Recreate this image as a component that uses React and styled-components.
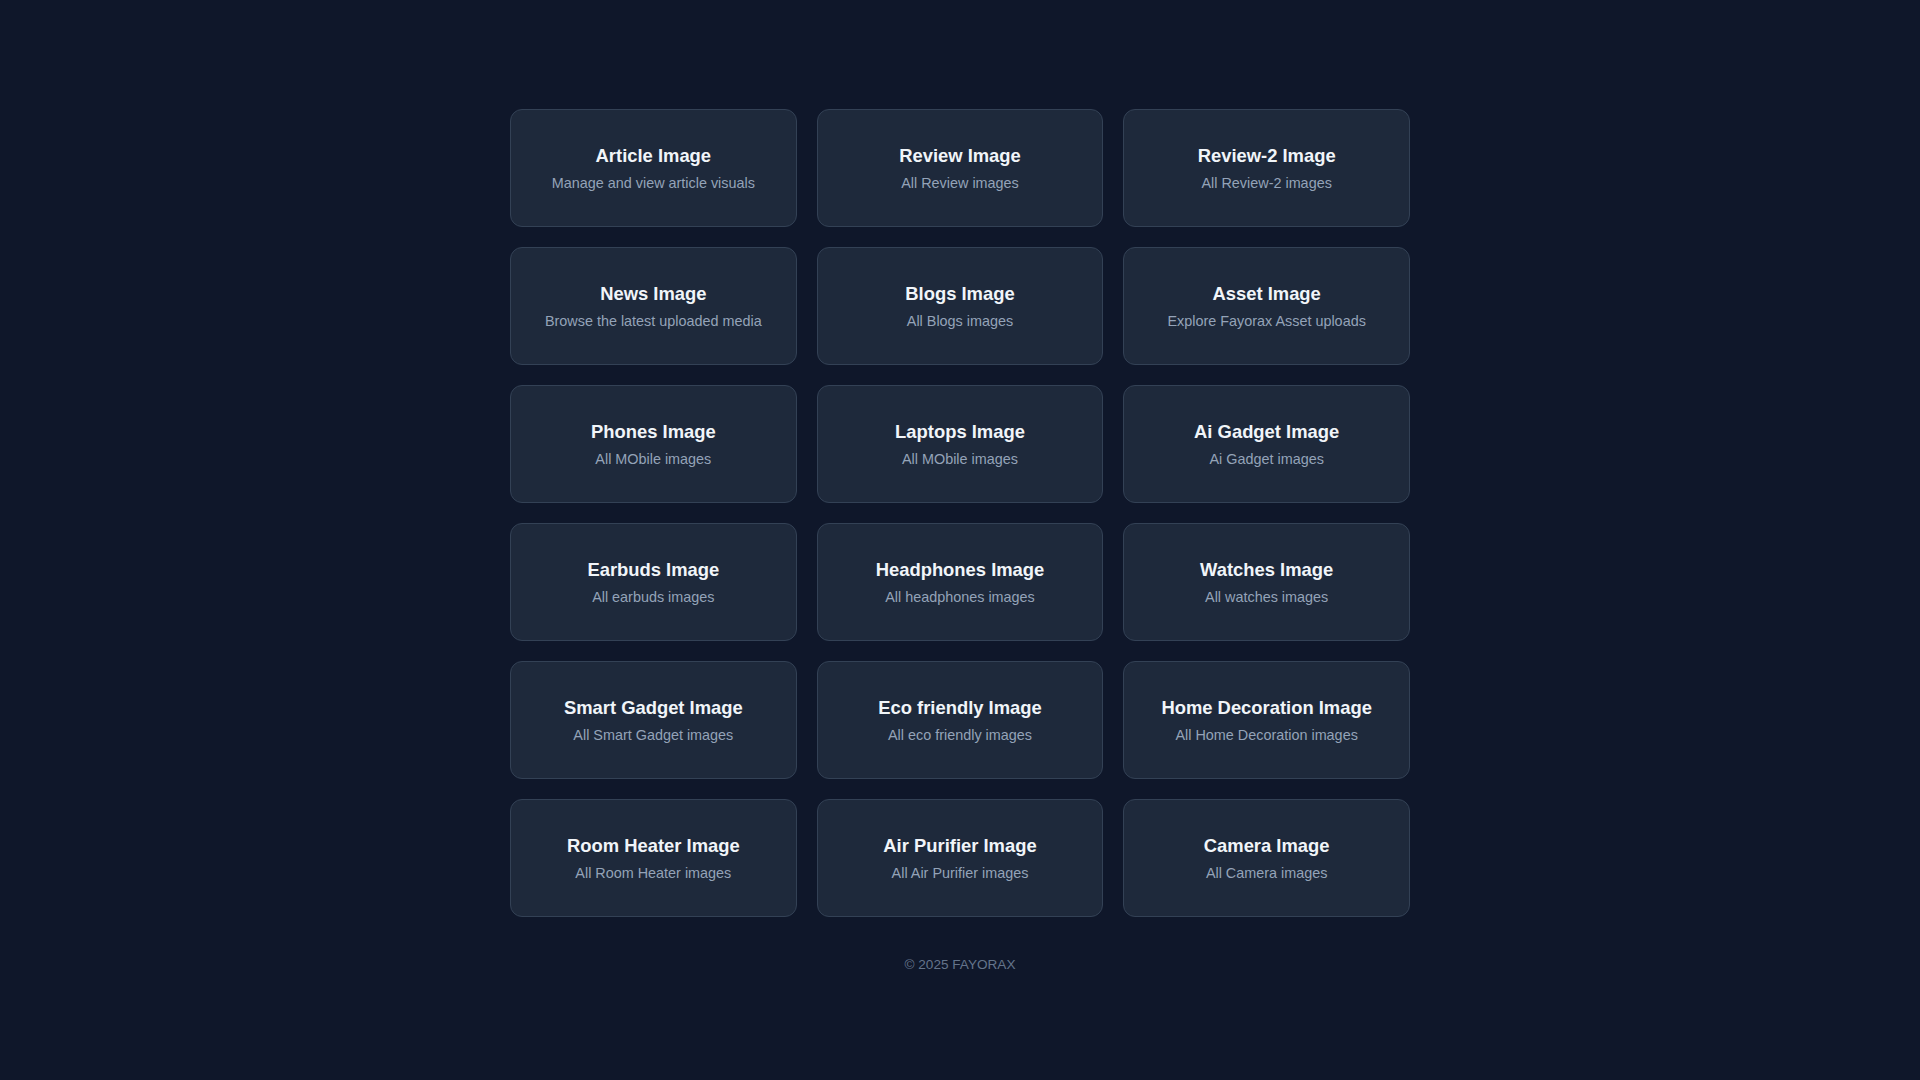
import React from "react";
import styled, { createGlobalStyle } from "styled-components";

const GlobalStyle = createGlobalStyle`
  html, body {
    margin: 0;
    padding: 0;
    background: #0f172a;
    font-family: "Liberation Sans", Arial, Helvetica, sans-serif;
  }
  * { box-sizing: border-box; }
`;

const Page = styled.div`
  min-height: 100vh;
  background: #0f172a;
  padding: 109px 16px 40px;
  display: flex;
  flex-direction: column;
  align-items: center;
`;

const Grid = styled.div`
  width: 100%;
  max-width: 900px;
  display: grid;
  grid-template-columns: repeat(3, 1fr);
  gap: 20px;
`;

const Card = styled.a`
  display: flex;
  flex-direction: column;
  align-items: center;
  text-align: center;
  padding: 32px 16px 32px;
  background: #1e293b;
  border: 1px solid #334155;
  border-radius: 12px;
  text-decoration: none;
  cursor: pointer;
`;

const Title = styled.h2`
  margin: 0;
  font-size: 18.4px;
  line-height: 28px;
  font-weight: 700;
  color: #f1f5f9;
`;

const Subtitle = styled.p`
  margin: 3px 0 0;
  font-size: 14.4px;
  line-height: 21px;
  color: #94a3b8;
`;

const Footer = styled.footer`
  margin-top: 40px;
  font-size: 13.6px;
  line-height: 15px;
  color: #64748b;
`;

const items = [
  ["Article Image", "Manage and view article visuals"],
  ["Review Image", "All Review images"],
  ["Review-2 Image", "All Review-2 images"],
  ["News Image", "Browse the latest uploaded media"],
  ["Blogs Image", "All Blogs images"],
  ["Asset Image", "Explore Fayorax Asset uploads"],
  ["Phones Image", "All MObile images"],
  ["Laptops Image", "All MObile images"],
  ["Ai Gadget Image", "Ai Gadget images"],
  ["Earbuds Image", "All earbuds images"],
  ["Headphones Image", "All headphones images"],
  ["Watches Image", "All watches images"],
  ["Smart Gadget Image", "All Smart Gadget images"],
  ["Eco friendly Image", "All eco friendly images"],
  ["Home Decoration Image", "All Home Decoration images"],
  ["Room Heater Image", "All Room Heater images"],
  ["Air Purifier Image", "All Air Purifier images"],
  ["Camera Image", "All Camera images"],
];

export default function App() {
  return (
    <>
      <GlobalStyle />
      <Page>
        <Grid>
          {items.map(([t, s]) => (
            <Card key={t}>
              <Title>{t}</Title>
              <Subtitle>{s}</Subtitle>
            </Card>
          ))}
        </Grid>
        <Footer>© 2025 FAYORAX</Footer>
      </Page>
    </>
  );
}
